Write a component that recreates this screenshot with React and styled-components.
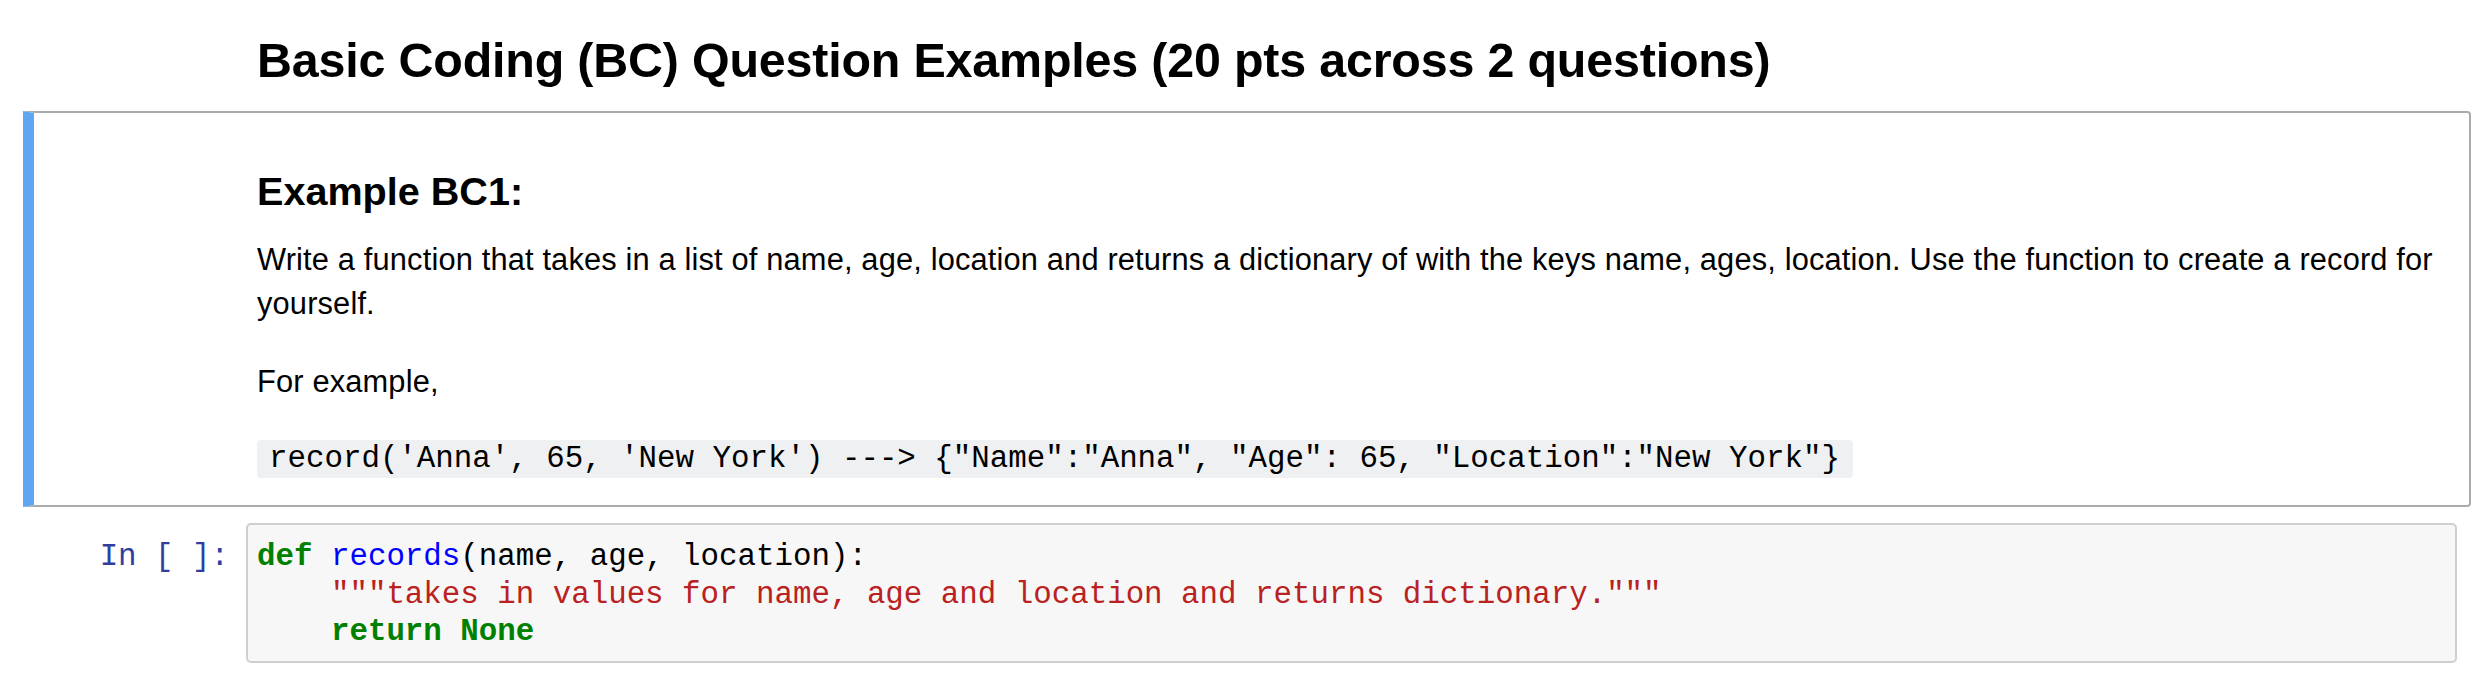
import React from "react";
import styled, { createGlobalStyle } from "styled-components";

const GlobalStyle = createGlobalStyle`
  html, body {
    margin: 0;
    padding: 0;
    background: #ffffff;
  }
  body {
    font-family: "Liberation Sans", Arial, sans-serif;
    color: #000000;
  }
`;

function App() {
  return (
    <Notebook>
      <GlobalStyle />
      <Title>Basic Coding (BC) Question Examples (20 pts across 2 questions)</Title>

      <MarkdownCell>
        <Heading>Example BC1:</Heading>
        <Para>
          Write a function that takes in a list of name, age, location and returns a dictionary of
          with the keys name, ages, location. Use the function to create a record for yourself.
        </Para>
        <Para gap={33.7}>For example,</Para>
        <Para gap={31.3}>
          <InlineCode>
            record('Anna', 65, 'New York') ---&gt; {"{"}"Name":"Anna", "Age": 65, "Location":"New York"{"}"}
          </InlineCode>
        </Para>
      </MarkdownCell>

      <CodeCell>
        <Prompt>In&nbsp;[&nbsp;]:</Prompt>
        <InputArea>
          <CodeLine>
            <Kw>def</Kw> <Fn>records</Fn>(name, age, location):
          </CodeLine>
          <CodeLine>
            {"    "}
            <Str>"""takes in values for name, age and location and returns dictionary."""</Str>
          </CodeLine>
          <CodeLine>
            {"    "}
            <Kw>return</Kw> <Kw>None</Kw>
          </CodeLine>
        </InputArea>
      </CodeCell>
    </Notebook>
  );
}

export default App;

const Notebook = styled.div`
  display: flex;
  flex-direction: column;
  padding: 31px 19px 0 23px;
  width: 2490px;
  box-sizing: border-box;
`;

const Title = styled.h2`
  margin: 0 0 0 234px;
  font-family: "Liberation Sans", Arial, sans-serif;
  font-size: 48.4px;
  font-weight: 700;
  line-height: 58px;
  letter-spacing: -0.18px;
  white-space: nowrap;
`;

const MarkdownCell = styled.div`
  display: flex;
  flex-direction: column;
  margin-top: 22px;
  padding: 54.5px 12px 26px 223px;
  border: 2px solid #ababab;
  border-left: 11px solid #5ea5f3;
  border-radius: 0 4px 4px 0;
`;

const Heading = styled.h3`
  margin: 0;
  font-size: 39.6px;
  font-weight: 700;
  line-height: 47.5px;
`;

const Para = styled.p`
  margin: ${(p) => p.gap || 23.3}px 0 0;
  font-size: 30.8px;
  line-height: 44px;
  letter-spacing: 0.16px;
`;

const InlineCode = styled.code`
  display: inline-block;
  padding: 0 13px 0 12px;
  background: #eff0f1;
  border-radius: 4px;
  font-family: "Liberation Mono", "Courier New", monospace;
  font-size: 30.8px;
  line-height: 38px;
  letter-spacing: 0;
  white-space: pre;
`;

const CodeCell = styled.div`
  display: flex;
  align-items: flex-start;
  margin: 16px 14px 0 0;
`;

const Prompt = styled.div`
  width: 223px;
  flex: none;
  box-sizing: border-box;
  padding: 15px 17px 0 0;
  text-align: right;
  font-family: "Liberation Mono", "Courier New", monospace;
  font-size: 30.8px;
  line-height: 37.4px;
  color: #303f9f;
  white-space: nowrap;
`;

const InputArea = styled.div`
  flex: 1;
  display: flex;
  flex-direction: column;
  padding: 13px 12px 10px 9px;
  background: #f7f7f7;
  border: 2px solid #cfcfcf;
  border-radius: 5px;
`;

const CodeLine = styled.div`
  font-family: "Liberation Mono", "Courier New", monospace;
  font-size: 30.8px;
  line-height: 37.4px;
  white-space: pre;
  color: #000000;
`;

const Kw = styled.span`
  color: #008000;
  font-weight: 700;
`;

const Fn = styled.span`
  color: #0000ff;
`;

const Str = styled.span`
  color: #ba2121;
`;
